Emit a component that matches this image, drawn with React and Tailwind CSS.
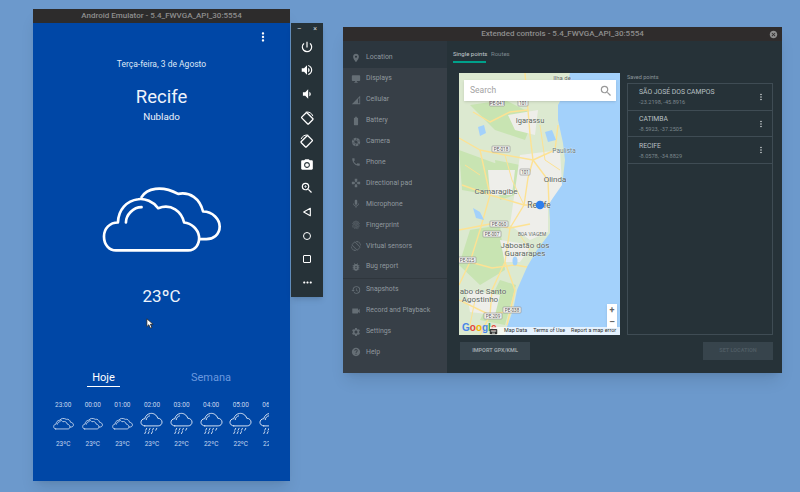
import React from "react";
import {
  MdPowerSettingsNew, MdVolumeUp, MdVolumeDown, MdPhotoCamera, MdZoomIn, MdMoreHoriz, MdMoreVert,
  MdPlace, MdDesktopWindows, MdNetworkCell, MdBatteryStd, MdCamera, MdPhone, MdGamepad, MdMic,
  MdFingerprint, MdScreenRotation, MdBugReport, MdHistory, MdVideocam, MdSettings, MdHelp, MdSearch, MdKeyboard, MdCancel,
} from "react-icons/md";

const font = { fontFamily: "Roboto, sans-serif" };

function BigCloud({ className, sw = 8 }) {
  return (
    <svg viewBox="30 40 370 212" className={className} fill="none" stroke="currentColor" strokeWidth={sw} strokeLinejoin="round" strokeLinecap="round">
      <path d="M78 242H295C318 242 330 222 328 200C325 178 305 160 283 158C275 125 245 100 205 115C190 95 165 85 145 88C110 92 85 120 84 158C60 158 42 175 42 200C42 225 58 242 78 242Z" />
      <path d="M108 158C108 135 130 112 155 112" />
      <path d="M155 82C170 55 215 45 265 72C300 65 330 85 340 125C370 125 390 150 390 170C390 195 370 208 350 208H330" />
    </svg>
  );
}

function RainCloud() {
  return (
    <svg viewBox="0 0 24 24" className="w-[23px] h-[23px]" fill="none" stroke="currentColor" strokeWidth="1" strokeLinecap="round" strokeLinejoin="round">
      <path d="M5 14.5H19C21.5 14.5 23 12.5 23 10.5C23 8.5 21 6.5 18.5 6.5C17.5 3 14 1 11 1.5C8 2 5.5 4 5 7C2.5 7 1 9 1 10.8C1 13 3 14.5 5 14.5Z" />
      <path d="M6.5 8C6.8 6 8 4.5 10 4" />
      <path d="M7 17L6 19M10.5 17L9.5 19M14 17L13 19M17.5 17L16.5 19M6 20.5L5 22.5M9.5 20.5L8.5 22.5M13 20.5L12 22.5" />
    </svg>
  );
}

const hours = [
  ["23:00", "23ºC", 0], ["00:00", "23ºC", 0], ["01:00", "23ºC", 0], ["02:00", "23ºC", 1],
  ["03:00", "22ºC", 1], ["04:00", "22ºC", 1], ["05:00", "22ºC", 1], ["06:00", "22ºC", 1],
];

function RotateIcon({ flip }) {
  return (
    <svg viewBox="0 0 16 16" className="w-[14px] h-[14px]" fill="none" stroke="white" strokeWidth="1.5" strokeLinejoin="round" strokeLinecap="round" style={flip ? { transform: "scaleX(-1)" } : undefined}>
      <rect x="3.8" y="3" width="8.4" height="11" rx="1" transform="rotate(-45 8 8)" />
      <path d="M7 1.2C10 .6 13.5 2.2 14.6 5.4" strokeWidth="1.1" />
    </svg>
  );
}

function Toolbar() {
  const cell = "h-[23.6px] flex items-center justify-center text-white";
  return (
    <div className="absolute left-[291px] top-[23px] w-[32px] h-[274px] bg-[#263238] shadow-md flex flex-col items-center" style={font}>
      <div className="h-[12px] w-full flex items-center justify-between px-[6px] pt-[1px] text-[#cfd4d6] text-[7px] leading-none">
        <span>–</span><span>×</span>
      </div>
      <div className="flex flex-col w-full">
        <div className={cell}><MdPowerSettingsNew size={14} /></div>
        <div className={cell}><MdVolumeUp size={14} /></div>
        <div className={cell}><MdVolumeDown size={14} /></div>
        <div className={cell}><RotateIcon /></div>
        <div className={cell}><RotateIcon flip /></div>
        <div className={cell}><MdPhotoCamera size={14} /></div>
        <div className={cell}><MdZoomIn size={14} /></div>
        <div className={cell}>
          <svg viewBox="0 0 12 12" className="w-[10px] h-[10px]" fill="none" stroke="white" strokeWidth="1.3" strokeLinejoin="round"><path d="M10 1.5V10.5L2 6Z" /></svg>
        </div>
        <div className={cell}><div className="w-[8px] h-[8px] rounded-full border-[1.3px] border-white" /></div>
        <div className={cell}><div className="w-[8px] h-[8px] rounded-[1px] border-[1.3px] border-white" /></div>
        <div className={cell}><MdMoreHoriz size={13} /></div>
      </div>
    </div>
  );
}

function PhoneWindow() {
  return (
    <div className="absolute left-[33px] top-[9px] w-[257px] h-[472px] flex flex-col shadow-lg" style={font}>
      <div className="h-[14px] bg-[#2d2c2c] flex items-center justify-center text-[#8e8e8e] text-[8px] font-medium leading-none shrink-0">
        Android Emulator - 5.4_FWVGA_API_30:5554
      </div>
      <div className="flex-1 bg-[#0047a6] text-white flex flex-col items-center relative">
        <div className="w-full flex justify-end pr-[20px] pt-[7px] h-[20px]">
          <MdMoreVert size={14} className="text-white" />
        </div>
        <div className="mt-[15px] text-[8.5px] leading-[12px] text-[#dfe8f6]">Terça-feira, 3 de Agosto</div>
        <div className="mt-[16px] text-[18.5px] leading-[22px] text-[#eef3fb]">Recife</div>
        <div className="mt-[3px] text-[9.8px] leading-[12px] text-[#eef3fb]">Nublado</div>
        <BigCloud className="mt-[60px] w-[123px] h-[71px] ml-[-1px] text-white" />
        <div className="mt-[32px] text-[17px] leading-[20px] text-[#eef3fb]">23ºC</div>
        <div className="mt-[65px] w-full flex pl-[54px] text-[11px] leading-[14px]">
          <div className="w-[33px] flex flex-col items-center">
            <span className="text-white">Hoje</span>
            <div className="w-full h-px bg-white mt-[1px]" />
          </div>
          <span className="ml-[71px] text-[#6b99df]">Semana</span>
        </div>
        <div className="mt-[14px] ml-[15.4px] w-[221px] flex overflow-hidden self-start">
          {hours.map(([h, t, rain]) => (
            <div key={h} className="w-[29.6px] shrink-0 flex flex-col items-center text-[#c6d6ee] text-[6.5px] leading-[8px]">
              <span>{h}</span>
              <div className="h-[25px] mt-[2px] flex items-center justify-center text-[#dbe5f4] w-full overflow-visible">
                {rain ? <RainCloud /> : <BigCloud className="w-[21px] h-[13px]" sw={14} />}
              </div>
              <span className="mt-[4px]">{t}</span>
            </div>
          ))}
        </div>
        <svg viewBox="0 0 10 14" className="absolute left-[113px] top-[295px] w-[8px] h-[11px]">
          <path d="M1 1V11L3.5 8.6L5.5 13L7.5 12L5.5 8H9Z" fill="white" stroke="#222" strokeWidth="1" />
        </svg>
      </div>
    </div>
  );
}

function Shield({ x, y, t, w = 15 }) {
  return (
    <g>
      <rect x={x - w / 2} y={y - 3} width={w} height={6} fill="#f4f4f0" stroke="#8a8a8a" strokeWidth=".6" rx=".8" />
      <text x={x} y={y + 1.7} fontSize="4.6" textAnchor="middle" fill="#555" fontFamily="Roboto">{t}</text>
    </g>
  );
}

function MapLabel({ x, y, t, s = 8.5, fill = "#5a655c" }) {
  return <text x={x} y={y} fontSize={s} textAnchor="middle" fill={fill} stroke="#ffffffb0" strokeWidth=".5" paintOrder="stroke" fontFamily="Roboto">{t}</text>;
}

function MapArea() {
  return (
    <div className="relative w-[161px] h-[262px] overflow-hidden bg-[#a3d1fb]">
      <svg viewBox="459 73 161 262" className="w-full h-full block">
        <path d="M459 73H570L566 90L558 105L558 120L563 143L565 160L563 178L556 190L549 205L550 220L550 233L537 250L527 267L517 290L513 310L507 327L505 335H459Z" fill="#dce9d0" />
        <path d="M470 105L505 100L535 115L525 140L495 130ZM459 150L500 165L490 195L462 190ZM470 230L500 225L505 270L480 285L459 265ZM500 280L516 285L505 325L480 320ZM495 160L520 165L515 195L500 200Z" fill="#c8e4b2" />
        <path d="M520 155L560 150L562 185L548 205L548 232L530 240L510 225L515 190ZM508 115L538 110L535 135L515 130ZM488 170L515 170L512 195L490 195ZM500 240L532 245L520 262L505 262ZM466 290L500 295L495 315L470 312Z" fill="#eeeeea" />
        <g fill="none" stroke="#fde293" strokeWidth="1.4" strokeLinejoin="round">
          <path d="M525 73L528 110L530 135L533 160L528 178L524 205L510 228L505 262L492 290L490 315L480 335" />
          <path d="M473 112L490 122L510 112L528 110" />
          <path d="M459 138L480 150L505 155L533 160L555 150L558 125" />
          <path d="M462 185L490 195L524 205L548 205" />
          <path d="M459 230L490 224L510 228L530 224" />
          <path d="M470 262L492 268L515 265L527 267" />
          <path d="M459 300L490 315L513 310" />
          <path d="M533 160L548 180L549 205M480 150L490 195L480 230L470 262L459 285" />
          <path d="M505 262L515 290L507 325" />
          <path d="M505 155L512 180L524 205M540 125L545 160L560 170M465 165L480 175M520 235L530 250M475 300L470 325" strokeWidth="1" />
        </g>
        <path d="M478 127L484 125L486 133L480 136Z" fill="#a3d1fb" />
        <path d="M545 132L552 130L556 140L548 142Z" fill="#a3d1fb" />
        <path d="M473 208L480 212L484 220L476 218Z" fill="#a3d1fb" />
        <ellipse cx="515" cy="261" rx="2.5" ry="4.5" fill="#a3d1fb" />
        <Shield x={497} y={103} t="PE-041" />
        <Shield x={523} y={103} t="101" w={10} />
        <Shield x={501} y={149} t="PE-018" w={18} />
        <Shield x={525} y={172} t="101" w={10} />
        <Shield x={499} y={224} t="PE-060" w={18} />
        <Shield x={492} y={234} t="PE-007" w={18} />
        <Shield x={467} y={260} t="PE-025" w={18} />
        <Shield x={512} y={310} t="PE-038" w={18} />
        <Shield x={493} y={316} t="PE-209" w={18} />
        <MapLabel x={562} y={80} t="Ilha de" s={6} />
        <MapLabel x={530} y={123} t="Igarassu" s={7.5} />
        <MapLabel x={564} y={153} t="Paulista" s={6.5} fill="#6a7a80" />
        <MapLabel x={555} y={182} t="Olinda" s={8} />
        <MapLabel x={496} y={194} t="Camaragibe" s={8} />
        <MapLabel x={539} y={208} t="Recife" s={8.5} />
        <MapLabel x={532} y={236} t="BOA VIAGEM" s={4.8} />
        <MapLabel x={525} y={248} t="Jaboatão dos" s={8} />
        <MapLabel x={525} y={256} t="Guararapes" s={8} />
        <MapLabel x={483} y={294} t="abo de Santo" s={8} />
        <MapLabel x={480} y={302} t="Agostinho" s={8} />
        <circle cx="540" cy="205" r="4.3" fill="#2f80ed" />
      </svg>
      <div className="absolute left-[5px] top-[7px] w-[152px] h-[21px] bg-white shadow flex items-center justify-between pl-[6px] pr-[3px]">
        <span className="text-[8.5px] leading-none text-[#a3a3a3]">Search</span>
        <MdSearch size={14} className="text-[#999]" />
      </div>
      <div className="absolute left-[148px] top-[231px] w-[10px] h-[24px] bg-white shadow-sm flex flex-col items-center justify-around text-[#666] text-[9px] font-bold leading-none">
        <span>+</span><span>–</span>
      </div>
      <div className="absolute left-[3px] bottom-[1px] text-[10px] font-bold leading-[12px] flex" style={{ fontFamily: "Liberation Sans, sans-serif" }}>
        <span className="text-[#4a84e8]">G</span><span className="text-[#e5463b]">o</span><span className="text-[#f4b400]">o</span><span className="text-[#4a84e8]">g</span><span className="text-[#33a853]">l</span><span className="text-[#e5463b]">e</span>
      </div>
      <div className="absolute left-[31px] right-0 bottom-0 h-[8px] bg-[#ffffffb8] flex items-center text-[5.4px] leading-none text-[#333] whitespace-nowrap">
        <MdKeyboard size={9} className="shrink-0 ml-[-1px]" />
        <span className="ml-[6px]">Map Data</span>
        <span className="ml-[6px]">Terms of Use</span>
        <span className="ml-[6px]">Report a map error</span>
      </div>
    </div>
  );
}

const navA = [
  ["Location", MdPlace], ["Displays", MdDesktopWindows], ["Cellular", MdNetworkCell], ["Battery", MdBatteryStd],
  ["Camera", MdCamera], ["Phone", MdPhone], ["Directional pad", MdGamepad], ["Microphone", MdMic],
  ["Fingerprint", MdFingerprint], ["Virtual sensors", MdScreenRotation], ["Bug report", MdBugReport],
];
const navB = [["Snapshots", MdHistory], ["Record and Playback", MdVideocam], ["Settings", MdSettings], ["Help", MdHelp]];

function NavItem({ label, Icon, active }) {
  return (
    <div className={`flex items-center pl-[8px] ${active ? "h-[27.4px] pt-[6.5px] bg-[#2c363e]" : "h-[20.9px]"}`}>
      <Icon size={10} className="text-[#656e75] shrink-0" />
      <span className="ml-[5px] text-[6.9px] leading-none text-[#8f989e]">{label}</span>
    </div>
  );
}

const points = [
  ["SÃO JOSÉ DOS CAMPOS", "-23.2198, -45.8916"],
  ["CATIMBA", "-8.5923, -37.2505"],
  ["RECIFE", "-8.0578, -34.8829"],
];

function ExtendedWindow() {
  return (
    <div className="absolute left-[343px] top-[27px] w-[439px] h-[346px] flex flex-col shadow-lg bg-[#263238]" style={font}>
      <div className="h-[14px] bg-[#2f2c2c] flex items-center justify-center relative shrink-0">
        <span className="text-[8px] font-medium leading-none text-[#8e8e8e]">Extended controls - 5.4_FWVGA_API_30:5554</span>
        <MdCancel size={9} className="absolute right-[4px] top-[2.5px] text-[#8e8e8e]" />
      </div>
      <div className="flex-1 flex min-h-0">
        <div className="w-[104px] bg-[#373f47] flex flex-col">
          {navA.map(([l, I], i) => <NavItem key={l} label={l} Icon={I} active={i === 0} />)}
          <div className="h-px bg-[#2f363d] my-[0.5px]" />
          {navB.map(([l, I]) => <NavItem key={l} label={l} Icon={I} />)}
        </div>
        <div className="flex-1 flex flex-col pl-[6px] pr-[9px]">
          <div className="flex items-start h-[32px] pt-[9px] text-[6px] leading-[8px]">
            <div className="w-[33px] h-[13px] border-b-2 border-[#00a08a] text-[#c4cbce] whitespace-nowrap">Single points</div>
            <div className="ml-[5px] text-[#7e898f]">Routes</div>
          </div>
          <div className="flex flex-1 min-h-0 pl-[6px] gap-[7px]">
            <MapArea />
            <div className="flex-1 flex flex-col">
              <div className="h-[10px] text-[5.5px] leading-[8px] text-[#8d979c]">Saved points</div>
              <div className="h-[252px] border border-[#3f4c54]">
                {points.map(([n, c]) => (
                  <div key={n} className="h-[26.7px] border-b border-[#3f4c54] flex items-center justify-between pl-[11px] pr-[6px]">
                    <div className="flex flex-col gap-[3px] pt-[1px]">
                      <span className="text-[6.8px] leading-[7px] text-[#b9c0c4] whitespace-nowrap">{n}</span>
                      <span className="text-[5.6px] leading-[6px] text-[#7c878d]">{c}</span>
                    </div>
                    <MdMoreVert size={10} className="text-[#cfd4d6]" />
                  </div>
                ))}
              </div>
            </div>
          </div>
          <div className="h-[38px] pl-[7px] pb-[13px] pt-[7px] flex justify-between shrink-0">
            <div className="w-[70px] h-[18px] bg-[#37444c] flex items-center justify-center text-[5.5px] font-bold leading-none text-[#9aa3a8]">IMPORT GPX/KML</div>
            <div className="w-[70px] h-[18px] bg-[#37444c] flex items-center justify-center text-[5.5px] font-bold leading-none text-[#4e5b63]">SET LOCATION</div>
          </div>
        </div>
      </div>
    </div>
  );
}

export default function App() {
  return (
    <div className="relative w-[800px] h-[492px] overflow-hidden bg-[#6c99cc]">
      <PhoneWindow />
      <Toolbar />
      <ExtendedWindow />
    </div>
  );
}
